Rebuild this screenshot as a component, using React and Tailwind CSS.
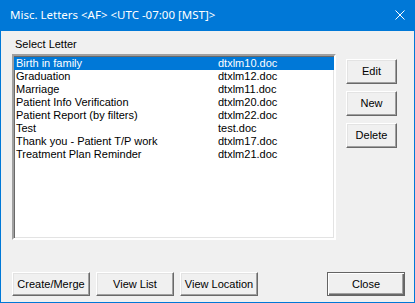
export default function App() {
  const letters = [
    { name: 'Birth in family', file: 'dtxlm10.doc' },
    { name: 'Graduation', file: 'dtxlm12.doc' },
    { name: 'Marriage', file: 'dtxlm11.doc' },
    { name: 'Patient Info Verification', file: 'dtxlm20.doc' },
    { name: 'Patient Report (by filters)', file: 'dtxlm22.doc' },
    { name: 'Test', file: 'test.doc' },
    { name: 'Thank you - Patient T/P work', file: 'dtxlm17.doc' },
    { name: 'Treatment Plan Reminder', file: 'dtxlm21.doc' },
  ];

  const btn =
    'flex items-center justify-center font-normal bg-[#f0f0f0] border border-t-white border-l-white border-r-[#696969] border-b-[#696969] shadow-[inset_-1px_-1px_#a0a0a0,inset_1px_1px_#e3e3e3] text-black';

  return (
    <div
      className="w-[415px] h-[303px] flex flex-col bg-[#0078d7] text-[11px] leading-[13px]"
      style={{ fontFamily: '"Liberation Sans", Arial, sans-serif' }}
    >
      <div className="h-[31px] flex items-center justify-between pl-[10px] pr-[10px] text-white">
        <span
          className="text-[11.5px] pb-[2px]"
          style={{ fontFamily: '"Noto Sans", "Open Sans", sans-serif' }}
        >
          Misc. Letters &lt;AF&gt; &lt;UTC -07:00 [MST]&gt;
        </span>
        <svg width="10" height="10" viewBox="0 0 10 10" className="mb-[1px]">
          <path d="M0.5 0.5 L9.5 9.5 M9.5 0.5 L0.5 9.5" stroke="white" strokeWidth="1" />
        </svg>
      </div>

      <div className="flex-1 mx-[1px] mb-[1px] bg-[#f0f0f0] pl-[11px] pt-[7px] flex flex-col">
        <div className="pl-[3px] text-black">Select Letter</div>

        <div className="flex mt-[3px]">
          <div className="w-[324px] h-[186px] bg-white border-2 border-t-[#a0a0a0] border-l-[#a0a0a0] border-r-white border-b-white shadow-[inset_1px_1px_#696969,inset_-1px_-1px_#e3e3e3] pt-[1px]">
            {letters.map((l, i) => (
              <div
                key={l.name}
                className={`flex h-[13px] pl-[2px] ${i === 0 ? 'bg-[#0078d7] text-white' : 'text-black'}`}
              >
                <span className="w-[202px] whitespace-nowrap">{l.name}</span>
                <span>{l.file}</span>
              </div>
            ))}
          </div>

          <div className="ml-[10px] mt-[5px] flex flex-col gap-[7px]">
            <button className={`${btn} w-[51px] h-[25px]`}>Edit</button>
            <button className={`${btn} w-[51px] h-[25px]`}>New</button>
            <button className={`${btn} w-[51px] h-[25px]`}>Delete</button>
          </div>
        </div>

        <div className="flex mt-[32px] gap-[6px]">
          <button className={`${btn} w-[78px] h-[24px]`}>Create/Merge</button>
          <button className={`${btn} w-[78px] h-[24px]`}>View List</button>
          <button className={`${btn} w-[78px] h-[24px]`}>View Location</button>
          <button className="ml-[63px] w-[78px] h-[24px] flex items-center justify-center font-normal bg-[#f0f0f0] border border-[#646464] shadow-[inset_1px_1px_white,inset_-1px_-1px_#696969,inset_-2px_-2px_#a0a0a0] text-black">
            Close
          </button>
        </div>
      </div>
    </div>
  );
}
